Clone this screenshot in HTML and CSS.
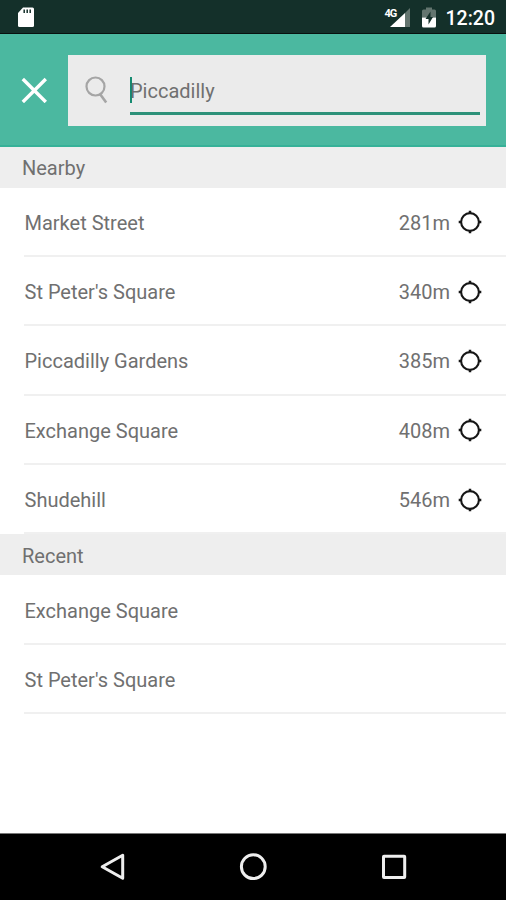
FILE: index.html
```html
<!DOCTYPE html>
<html lang="en">
<head>
<meta charset="utf-8">
<title>Search stops</title>
<link rel="stylesheet" href="styles.css">
</head>
<body>
<svg class="defs" width="0" height="0">
  <symbol id="locate" viewBox="0 0 24 24">
    <circle cx="12" cy="12" r="8.900" fill="none" stroke="#161616" stroke-width="2.100"/>
    <path d="M12 .7V4M12 20v3.300M.7 12H4M20 12h3.300" stroke="#161616" stroke-width="2.500"/>
  </symbol>
</svg>
<div class="screen">
  <header class="status">
    <svg class="sd" width="18" height="22" viewBox="0 0 18 22"><path d="M6 .5h9.500q1.500 0 1.500 1.500v16.500q0 1.500-1.500 1.500h-13Q1 20 1 18.500V6z" fill="#fff"/><path d="M7.200 2.500V6M10.200 2.500V6M13.200 2.500V6" stroke="#14302a" stroke-width="1.500"/></svg>
    <div class="signal">
      <svg width="26" height="22" viewBox="0 0 26 22"><path d="M20 6 25 1v19h-5z" fill="#63756f"/><path d="M5 20 20 6V20z" fill="#fff"/></svg>
      <span class="network">4G</span>
    </div>
    <svg class="battery" width="16" height="22" viewBox="0 0 16 22"><path d="M1 10.500V4Q1 2.500 2.500 2.500H5V.5h6v2h2.500Q15 2.500 15 4v6.500z" fill="#63756f"/><path d="M1 10.500h14V19q0 1.500-1.500 1.500h-11Q1 20.500 1 19z" fill="#fff"/><path d="M9.500 4.500 4.500 12H7.500v5.500L12 10H9.500z" fill="#14302a"/></svg>
    <span class="clock">12:20</span>
  </header>
  <div class="toolbar">
    <svg class="close" width="26" height="26" viewBox="0 0 26 26"><path d="M1.800 2l23 23M24.800 2l-23 23" stroke="#fff" stroke-width="3.400"/></svg>
    <div class="search">
      <svg class="glass" width="24" height="28" viewBox="0 0 24 28"><circle cx="10.500" cy="10.500" r="9" fill="none" stroke="#a5a5a5" stroke-width="2.200"/><path d="M15 18 21.200 26.500" stroke="#a5a5a5" stroke-width="2.600"/></svg>
      <div class="field"><span class="caret"></span><span class="hint">Piccadilly</span></div>
    </div>
  </div>
  <main class="list">
    <h2 class="heading">Nearby</h2>
    <ul class="rows">
      <li class="row"><span>Market Street</span><span class="dist">281m</span><svg class="pin"><use href="#locate"/></svg></li>
      <li class="row"><span>St Peter's Square</span><span class="dist">340m</span><svg class="pin"><use href="#locate"/></svg></li>
      <li class="row"><span>Piccadilly Gardens</span><span class="dist">385m</span><svg class="pin"><use href="#locate"/></svg></li>
      <li class="row"><span>Exchange Square</span><span class="dist">408m</span><svg class="pin"><use href="#locate"/></svg></li>
      <li class="row"><span>Shudehill</span><span class="dist">546m</span><svg class="pin"><use href="#locate"/></svg></li>
    </ul>
    <h2 class="heading">Recent</h2>
    <ul class="rows">
      <li class="row"><span>Exchange Square</span></li>
      <li class="row"><span>St Peter's Square</span></li>
    </ul>
  </main>
  <nav class="navbar">
    <svg width="28" height="30" viewBox="0 0 28 30"><path d="M4.200 14.700 24.700 3.300v23z" fill="none" stroke="#eee" stroke-width="3" stroke-linejoin="round"/></svg>
    <svg width="28" height="30" viewBox="0 0 28 30"><circle cx="14.300" cy="14.700" r="11.900" fill="none" stroke="#eee" stroke-width="3"/></svg>
    <svg width="28" height="30" viewBox="0 0 28 30"><rect x="3.500" y="4.300" width="21.200" height="21.200" rx=".5" fill="none" stroke="#eee" stroke-width="3"/></svg>
  </nav>
</div>
</body>
</html>
```
FILE: styles.css
```css
* { box-sizing: border-box; }
body { margin: 0; background: #fff; color: #707070; font-family: Roboto, sans-serif; font-size: 20px; }
.defs { display: block; }
.screen { display: flex; flex-direction: column; width: 506px; height: 900px; }
.status { display: flex; align-items: center; height: 34px; padding: 3px 11px 0 17px; background: #14302a; border-bottom: 1px solid #08110f; color: #fff; }
.signal { position: relative; height: 22px; margin-left: auto; }
.network { position: absolute; left: 0; top: 1px; font-size: 11px; line-height: 11px; font-weight: 700; letter-spacing: -1px; }
.battery { margin-left: 10px; }
.clock { margin-left: 9px; font-weight: 500; font-size: 19.500px; }
.toolbar { display: flex; align-items: center; height: 112.500px; padding: 2px 20px 0 21px; background: #4bb8a0; border-bottom: 2px solid #36b198; }
.close { flex: none; }
.search { display: flex; align-items: center; flex: 1; height: 71px; margin-left: 21px; padding: 0 6px 0 17px; background: #ebebeb; }
.glass { flex: none; }
.field { display: flex; align-items: center; flex: 1; height: 50px; margin-left: 21px; padding-top: 2px; border-bottom: 3px solid #2d9179; }
.caret { width: 2px; height: 26px; margin-right: -2px; background: #168b71; }
.hint { padding-top: 2px; }
.list { flex: 1; }
.heading { display: flex; align-items: center; height: 41px; margin: 0; padding: 2px 22px 0; background: #eee; font-size: 20px; font-weight: 400; }
.rows { margin: 0; padding: 0; list-style: none; }
.row { display: flex; align-items: center; height: 69.400px; margin-left: 24px; padding: 3px 24px 0 .500px; border-bottom: 2px solid #f0f0f0; }
.dist { margin-left: auto; }
.pin { width: 24px; height: 24px; margin: -1px 0 0 8px; }
.navbar { display: flex; justify-content: center; align-items: center; gap: 113px; height: 67px; background: #000; border-top: 1px solid #777; }
```
